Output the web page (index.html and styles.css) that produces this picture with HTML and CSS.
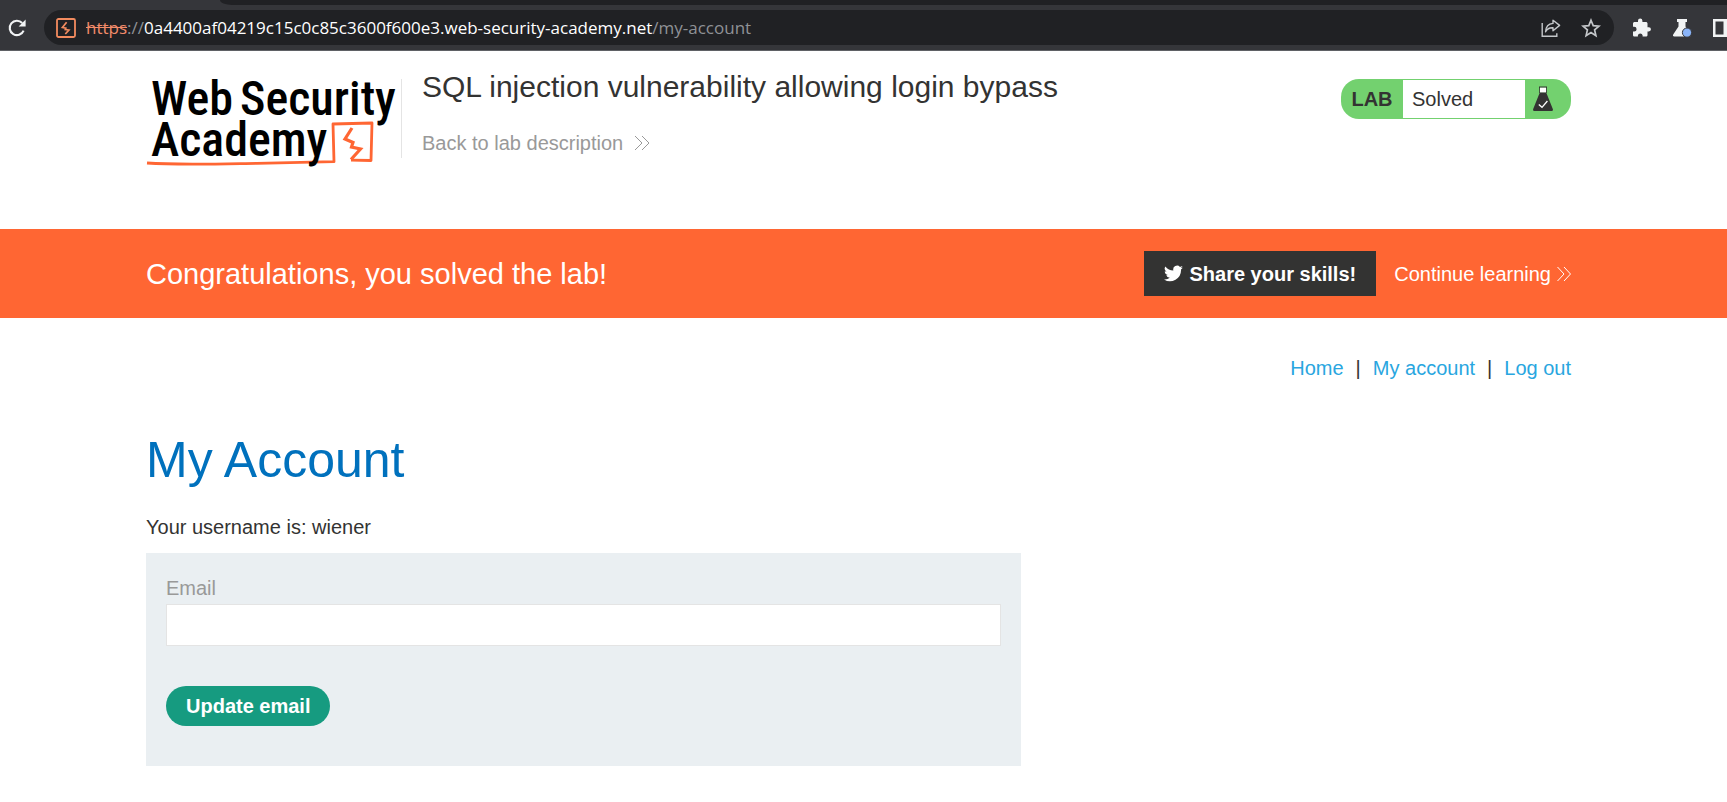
FILE: index.html
```
<!DOCTYPE html>
<html lang="en">
<head>
<meta charset="utf-8">
<title>SQL injection vulnerability allowing login bypass</title>
<link rel="stylesheet" href="styles.css">
</head>
<body>
<div class="browser">
  <div class="tabstrip"><div class="tabstrip-rest"></div></div>
  <div class="toolbar">
    <button class="tool" aria-label="Reload">
      <svg width="18" height="18" viewBox="0 0 18 18"><path d="M15.6 11.6A7.2 7.2 0 1 1 14.2 4" fill="none" stroke="#f1f3f4" stroke-width="2.1"/><path d="M17.6.6v7h-7z" fill="#f1f3f4"/></svg>
    </button>
    <div class="omnibox">
      <svg class="site-icon" width="20" height="20" viewBox="0 0 20 20"><rect x="1" y="1" width="18" height="18" rx="1.5" fill="none" stroke="#f28b5f" stroke-width="1.8"/><path d="M10.600 4.200 6.400 9.500l3.400.6-.5 1.400 3.600.5-3.600 4" fill="none" stroke="#f28b5f" stroke-width="1.700"/></svg>
      <div class="url"><span class="scheme">https</span>://<span class="host">0a4400af04219c15c0c85c3600f600e3.web-security-academy.net</span>/my-account</div>
      <button class="tool" aria-label="Share">
        <svg width="20" height="20" viewBox="0 0 20 20" fill="none" stroke="#c4c7ca" stroke-width="1.4"><path d="M1.2 5v13.2h14.6v-3"/><path d="M12 2.2 18.6 7.4 12 12.8V9.8c-3.400-.2-5.800.8-7.400 4 .2-5 2.800-8 7.400-8.400z" stroke-linejoin="round"/></svg>
      </button>
      <button class="tool" aria-label="Bookmark">
        <svg width="20" height="20" viewBox="0 0 20 20"><path d="m10 2.200 2.200 5.400 5.800.5-4.400 3.800 1.300 5.700-4.900-3-4.900 3 1.300-5.700L2 8.100l5.800-.5z" fill="none" stroke="#c4c7ca" stroke-width="1.700"/></svg>
      </button>
    </div>
    <div class="extensions">
      <button class="tool" aria-label="Extensions">
        <svg width="20" height="20" viewBox="0 0 20 20"><path d="M16.800 9.200h-1.300V5.600c0-1-.7-1.700-1.700-1.700h-3.400V2.700a2.200 2.200 0 0 0-4.400 0v1.200H2.700C1.700 3.900 1 4.600 1 5.600v3.200h1.200a2.400 2.400 0 0 1 0 4.800H1v3.300c0 1 .7 1.700 1.700 1.700h3.200v-1.300a2.400 2.400 0 0 1 4.700 0v1.300h3.200c1 0 1.700-.7 1.700-1.700v-3.400h1.300a2.150 2.150 0 0 0 0-4.300z" fill="#f1f3f4"/></svg>
      </button>
      <button class="tool" aria-label="Labs">
        <svg width="20" height="20" viewBox="0 0 20 20"><path d="M5 1h10v3h-1.500v4.500l5 8c.5 1-.1 2-1.200 2H2.300c-1.100 0-1.700-1-1.100-2l5.300-8V4H5z" fill="#f1f3f4"/><circle cx="15" cy="14.600" r="4.600" fill="#8ab4f8" stroke="#35363a"/></svg>
      </button>
      <button class="tool" aria-label="Side panel">
        <svg width="20" height="20" viewBox="0 0 20 20"><path d="M1 1h18v18H1zM3.500 3.500v13h8v-13z" fill="#f1f3f4" fill-rule="evenodd"/></svg>
      </button>
    </div>
  </div>
</div>

<div class="page">
  <header class="lab-header container">
    <a href="#" class="logo" aria-label="Web Security Academy">
      <svg width="255" height="108" viewBox="0 -12 255 108">
        <path d="M1 84c30 2.200 70 1 110 .3 30-.6 55-1 77-1.600L187 45l39-1-1 37.500-20-.3" fill="none" stroke="#ff6633" stroke-width="2.800" stroke-linejoin="round"/>
        <path d="m206 49-7 11 8 3.500-1.500 4.500 9 2-9.500 10.500" fill="none" stroke="#ff6633" stroke-width="3.200"/>
        <g class="logo-text"><text x="5" y="36">Web</text><text x="94" y="36">Security</text><text x="5" y="77">Academy</text></g>
      </svg>
    </a>
    <div class="title">
      <h2>SQL injection vulnerability allowing login bypass</h2>
      <a href="#" class="back">Back to lab description
        <svg width="16" height="16" viewBox="0 0 16 16"><path d="m1 1 7 7-7 7M8 1l7 7-7 7" fill="none" stroke="currentColor"/></svg>
      </a>
    </div>
    <div class="status">
      <span class="status-lab">LAB</span>
      <span class="status-text">Solved</span>
      <svg class="flask" width="20" height="26" viewBox="0 0 20 26"><path d="M6 .5h8v1.200H6z" fill="#333332"/><path d="M7 1.700h6v5H7z" fill="#fff"/><path d="M6.500 1v6M13.500 1v6" stroke="#333332" stroke-width=".8"/><path d="M6.800 6.500h6.400L19.800 23c.4 1.200-.2 2-1.300 2h-17C.4 25-.2 24.200.2 23z" fill="#333332"/><path d="m5.800 18.600 3.200 2.700 5.400-6.300" fill="none" stroke="#fff" stroke-width="1.300"/></svg>
    </div>
  </header>

  <section class="banner">
    <div class="container banner-row">
      <h3>Congratulations, you solved the lab!</h3>
      <button class="share">
        <svg width="19" height="17" viewBox="0 0 24 20"><path d="M24 2.400a9.800 9.800 0 0 1-2.800.8A4.900 4.900 0 0 0 23.300.500a9.900 9.900 0 0 1-3.100 1.200 4.900 4.900 0 0 0-8.400 4.500A14 14 0 0 1 1.700 1a4.900 4.900 0 0 0 1.500 6.600A4.900 4.900 0 0 1 1 7v.1a4.900 4.900 0 0 0 3.900 4.800 4.900 4.900 0 0 1-2.200.1 4.900 4.900 0 0 0 4.600 3.400A9.900 9.900 0 0 1 0 17.500 14 14 0 0 0 21.500 5z" fill="#fff"/></svg>
        Share your skills!
      </button>
      <a href="#" class="continue">Continue learning
        <svg width="14" height="16" viewBox="0 0 14 16"><path d="m.5 1 6.500 7-6.500 7M7 1l6.500 7L7 15" fill="none" stroke="currentColor"/></svg>
      </a>
    </div>
  </section>

  <main class="container">
    <nav class="links"><a href="#">Home</a><span>|</span><a href="#">My account</a><span>|</span><a href="#">Log out</a></nav>
    <h1>My Account</h1>
    <p class="username">Your username is: wiener</p>
    <form class="email-form">
      <label for="email">Email</label>
      <input id="email" type="email">
      <button type="button">Update email</button>
    </form>
  </main>
</div>
</body>
</html>
```
FILE: styles.css
```
* { box-sizing: border-box; }
body {
  margin: 0;
  background: #fff;
  color: #333332;
  font: 20px/24px "Liberation Sans", Arial, sans-serif;
  overflow-x: hidden;
}
h1, h2, h3, p { margin: 0; font-weight: normal; }
a { text-decoration: none; }
svg { display: block; flex: none; }
button { font: inherit; border: 0; cursor: pointer; }

.browser { background: #35363a; border-bottom: 1px solid #5f6165; overflow: hidden; }
.tabstrip { height: 5px; margin-bottom: 5px; padding-left: 220px; }
.tabstrip-rest { height: 5px; background: #202124; border-bottom-left-radius: 12px 5px; }
.toolbar { display: flex; align-items: center; padding: 0 0 5px 8px; }
.tool { background: none; padding: 0; flex: none; }
.omnibox {
  flex: 1;
  display: flex;
  align-items: center;
  gap: 20px;
  height: 35px;
  margin-left: 18px;
  padding: 0 13px 0 12px;
  border-radius: 18px;
  background: #202124;
}
.site-icon { margin-right: -10px; }
.url {
  flex: 1;
  color: #8f9296;
  font: 17px/24px "Segoe UI", "Open Sans", "Noto Sans", sans-serif;
  white-space: nowrap;
}
.scheme { color: #f28b6a; text-decoration: line-through; }
.host { color: #fff; }
.extensions { display: flex; gap: 20px; margin: 0 -5px 0 18px; }

.page { padding-right: 10px; }
.container { width: calc(100% - 40px); max-width: 1425px; margin: 0 auto; }

.lab-header { display: flex; align-items: flex-start; padding: 16px 0 54px; }
.logo-text { font: 500 48px "Roboto Condensed", Roboto, sans-serif; fill: #000; }
.title { flex: 1; margin-top: 12px; padding-left: 20px; height: 79px; border-left: 1px solid #e4e4e4; }
.title h2 { font-size: 30px; line-height: 36px; margin-top: -10px; }
.back { display: flex; align-items: center; gap: 11px; margin-top: 26px; color: #999; }
.status {
  display: flex;
  align-items: center;
  width: 230px;
  height: 40px;
  margin-top: 12px;
  padding: 1px 18px 1px 0;
  border-radius: 18px;
  background: #73d16f;
}
.status-lab { width: 62px; text-align: center; font-weight: bold; }
.status-text { flex: 1; height: 38px; line-height: 38px; padding-left: 9px; background: #fff; }
.flask { margin-left: 8px; }

.banner { margin-right: -10px; padding-right: 10px; background: #ff6633; color: #fff; }
.banner-row { display: flex; align-items: center; padding: 22px 0; }
.banner h3 { flex: 1; font-size: 29px; line-height: 36px; }
.share {
  display: flex;
  align-items: center;
  gap: 6px;
  height: 45px;
  padding: 0 20px;
  background: #333332;
  color: #fff;
  font-weight: bold;
}
.continue { display: flex; align-items: center; gap: 6px; margin-left: 18px; color: #fff; }

.links { display: flex; justify-content: flex-end; gap: 12px; padding-top: 38px; }
.links a { color: #29a6e0; }
h1 { margin-top: 50px; font-size: 50px; line-height: 60px; color: #0071bd; }
.username { margin-top: 25px; }
.email-form {
  width: 875px;
  max-width: 100%;
  margin-top: 14px;
  padding: 23px 20px 40px;
  background: #eaeff2;
}
.email-form label { display: block; color: #999; }
.email-form input {
  display: block;
  width: 100%;
  height: 42px;
  margin: 4px 0 40px;
  padding: 0 8px;
  border: 1px solid #e4e4e4;
  background: #fff;
  font: inherit;
}
.email-form button {
  height: 40px;
  padding: 0 20px;
  border-radius: 20px;
  background: #169b80;
  color: #fff;
  font-weight: bold;
}
```
